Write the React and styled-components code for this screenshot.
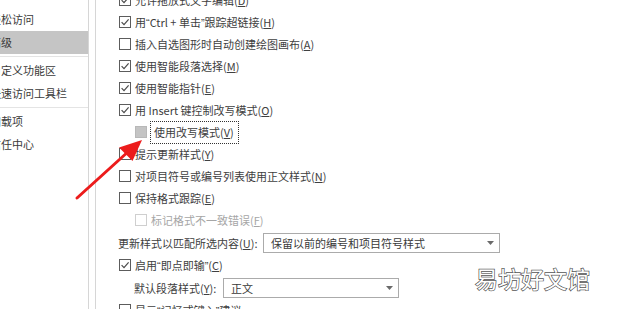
import React from "react";
import styled, { createGlobalStyle } from "styled-components";

const FONT = `"Noto Sans CJK SC", "Noto Sans", "Liberation Sans", sans-serif`;

const GlobalStyle = createGlobalStyle`
    html, body {
        margin: 0;
        padding: 0;
        background: #ffffff;
        overflow: hidden;
    }
    body {
        font-family: ${FONT};
    }
`;

const NAV = [
    { label: "轻松访问" },
    { label: "高级", selected: true },
    { sep: true },
    { label: "自定义功能区" },
    { label: "快速访问工具栏" },
    { sep: true },
    { label: "加载项" },
    { label: "信任中心" },
];

const Mn = ({ k }) => (
    <>
        (<u>{k}</u>)
    </>
);

// narrow western quotes, as in the dialog
const Q = ({ children }) => <Quote>{children}</Quote>;

const ROWS = [
    { type: "check", checked: true, text: <>允许拖放式文字编辑<Mn k="D" /></> },
    { type: "check", checked: true, text: <>用<Q>“</Q>Ctrl + 单击<Q>”</Q>跟踪超链接<Mn k="H" /></> },
    { type: "check", text: <>插入自选图形时自动创建绘图画布<Mn k="A" /></> },
    { type: "check", checked: true, text: <>使用智能段落选择<Mn k="M" /></> },
    { type: "check", checked: true, text: <>使用智能指针<Mn k="E" /></> },
    { type: "check", checked: true, text: <>用 Insert 键控制改写模式<Mn k="O" /></> },
    { type: "check", indent: true, grayed: true, focused: true, text: <>使用改写模式<Mn k="V" /></> },
    { type: "check", text: <>提示更新样式<Mn k="Y" /></> },
    { type: "check", text: <>对项目符号或编号列表使用正文样式<Mn k="N" /></> },
    { type: "check", text: <>保持格式跟踪<Mn k="E" /></> },
    { type: "check", indent: true, disabled: true, text: <>标记格式不一致错误<Mn k="F" /></> },
    {
        type: "select",
        label: <>更新样式以匹配所选内容<Mn k="U" />:</>,
        labelWidth: 145,
        selectWidth: 237,
        value: "保留以前的编号和项目符号样式",
    },
    { type: "check", checked: true, text: <>启用<Q>“</Q>即点即输<Q>”</Q><Mn k="C" /></> },
    {
        type: "select",
        indent: true,
        label: <>默认段落样式<Mn k="Y" />:</>,
        labelWidth: 89,
        selectWidth: 176,
        value: "正文",
    },
    { type: "check", text: <>显示<Q>“</Q>记忆式键入<Q>”</Q>建议</> },
];

const CheckBox = ({ checked, grayed, disabled }) => (
    <Box $grayed={grayed} $disabled={disabled}>
        {checked && (
            <svg width="10" height="10" viewBox="0 0 10 10">
                <path d="M1.6 5.2 L4 7.6 L8.6 2.4" fill="none" stroke="#4a4a4a" strokeWidth="1.2" />
            </svg>
        )}
    </Box>
);

const App = () => {
    return (
        <>
            <GlobalStyle />
            <Page>
                <Sidebar>
                    {NAV.map((item, i) =>
                        item.sep ? (
                            <Separator key={i} />
                        ) : (
                            <NavItem key={i} $selected={item.selected}>
                                {item.label}
                            </NavItem>
                        )
                    )}
                </Sidebar>
                <Main>
                    <List>
                        {ROWS.map((row, i) =>
                            row.type === "check" ? (
                                <Row key={i} $indent={row.indent}>
                                    <CheckBox checked={row.checked} grayed={row.grayed} disabled={row.disabled} />
                                    <Label $disabled={row.disabled} $focused={row.focused}>
                                        {row.text}
                                    </Label>
                                </Row>
                            ) : (
                                <SelectRow key={i} $indent={row.indent}>
                                    <SelectLabel style={{ width: row.labelWidth }}>{row.label}</SelectLabel>
                                    <Select style={{ width: row.selectWidth }}>
                                        <span>{row.value}</span>
                                        <svg width="7" height="4" viewBox="0 0 7 4">
                                            <path d="M0 0 H7 L3.5 4 Z" fill="#6a6a6a" />
                                        </svg>
                                    </Select>
                                </SelectRow>
                            )
                        )}
                    </List>
                </Main>
                <Arrow width="160" height="210" viewBox="0 0 160 210">
                    <line x1="77" y1="198" x2="130" y2="150" stroke="#ec1c1c" strokeWidth="3" strokeLinecap="round" />
                    <path d="M142 140 L119 147.5 L132.5 161 Z" fill="#ec1c1c" />
                </Arrow>
                <Watermark>易坊好文馆</Watermark>
            </Page>
        </>
    );
};

const Page = styled.div`
    position: relative;
    display: flex;
    width: 620px;
    height: 309px;
    overflow: hidden;
    background: #ffffff;
    color: #444444;
    font-family: ${FONT};
    font-size: 11px;
`;

const Sidebar = styled.div`
    flex: 0 0 88px;
    border-right: 1px solid #d6d6d6;
    padding-top: 8px;
    overflow: hidden;
`;

const NavItem = styled.div`
    height: 23px;
    line-height: 23px;
    white-space: nowrap;
    text-indent: -10px;
    background: ${(p) => (p.$selected ? "#c5c5c5" : "transparent")};
    color: #3a3a3a;
`;

const Separator = styled.div`
    height: 1px;
    margin: 2px 0 2px;
    background: #e4e4e4;
`;

const Main = styled.div`
    flex: 1;
    margin-left: 6px;
    border-left: 1px solid #d6d6d6;
    padding-left: 23px;
    overflow: hidden;
`;

const List = styled.div`
    margin-top: -11px;
    display: flex;
    flex-direction: column;
`;

const Row = styled.div`
    height: 22px;
    display: flex;
    align-items: center;
    gap: 4px;
    padding-left: ${(p) => (p.$indent ? "16px" : "0")};
    white-space: nowrap;
`;

const Box = styled.div`
    box-sizing: border-box;
    width: 12px;
    height: 12px;
    flex: 0 0 12px;
    display: flex;
    align-items: center;
    justify-content: center;
    border: 1px solid ${(p) => (p.$disabled ? "#cfcfcf" : p.$grayed ? "#b8b8b8" : "#5c5c5c")};
    background: ${(p) => (p.$grayed ? "#c4c4c4" : "#ffffff")};
`;

const Label = styled.span`
    color: ${(p) => (p.$disabled ? "#a6a6a6" : "#404040")};
    padding: 2px 3px 3px 0;
    ${(p) =>
        p.$focused &&
        `
        margin-left: -1px;
        padding: 2px 4px 3px 3px;
        border: 1px dotted #333333;
    `}

    u {
        text-underline-offset: 1px;
    }
`;

const Quote = styled.span`
    font-family: "Liberation Sans", sans-serif;
`;

const SelectRow = styled.div`
    height: 23px;
    display: flex;
    align-items: center;
    padding-left: ${(p) => (p.$indent ? "16px" : "0")};
    white-space: nowrap;
    color: #404040;
`;

const SelectLabel = styled.span`
    margin-left: -1px;
`;

const Select = styled.div`
    box-sizing: border-box;
    height: 20px;
    border: 1px solid #ababab;
    background: #ffffff;
    display: flex;
    align-items: center;
    justify-content: space-between;
    padding: 0 5px 0 7px;
    color: #3a3a3a;
`;

const Arrow = styled.svg`
    position: absolute;
    left: 0;
    top: 0;
    pointer-events: none;
`;

const Watermark = styled.div`
    position: absolute;
    right: 30px;
    top: 261px;
    font-size: 23px;
    font-family: ${FONT};
    color: #ffffff;
    -webkit-text-stroke: 1.4px #555555;
    paint-order: stroke fill;
`;

export default App;
